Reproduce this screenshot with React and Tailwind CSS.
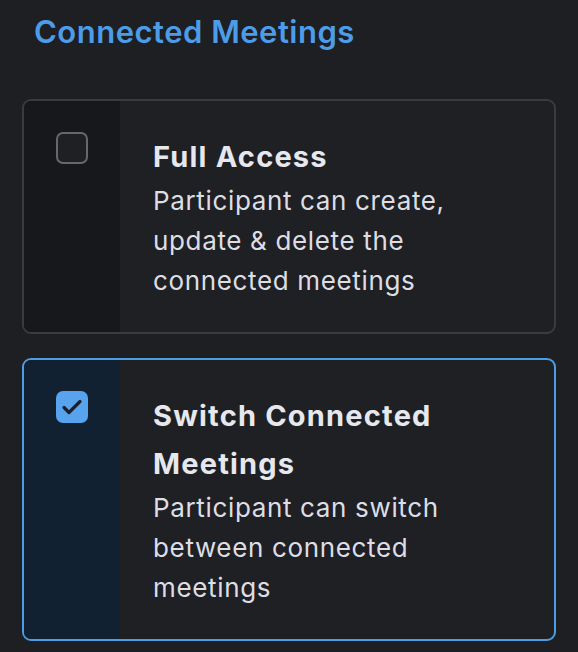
import React, { useState } from 'react';

const options = [
  {
    id: 'full',
    title: 'Full Access',
    description: 'Participant can create, update & delete the connected meetings',
  },
  {
    id: 'switch',
    title: 'Switch Connected Meetings',
    description: 'Participant can switch between connected meetings',
  },
];

const Checkbox = ({ checked }) =>
  checked ? (
    <div className="w-8 h-8 rounded-[7px] bg-[#58a3ee]">
      <svg width="32" height="32" viewBox="0 0 32 32" fill="none">
        <path d="M8 16.5l5 5 11-11" stroke="#1c2028" strokeWidth="3.2" strokeLinecap="round" strokeLinejoin="round" />
      </svg>
    </div>
  ) : (
    <div className="w-8 h-8 rounded-[7px] border-2 border-[#66676c] bg-[#1f2024]" />
  );

const App = () => {
  const [selected, setSelected] = useState('switch');

  return (
    <div className="min-h-[652px] bg-[#1e1f23] px-[22px] pt-[14px] font-['Inter',sans-serif]">
      <h2 className="ml-3 text-[31px] leading-[36px] font-semibold tracking-[0.5px] text-[#4c9ce8]">
        Connected Meetings
      </h2>

      <div className="mt-[49px] flex flex-col gap-[24px]">
        {options.map((opt) => {
          const active = selected === opt.id;
          return (
            <div
              key={opt.id}
              onClick={() => setSelected(opt.id)}
              className={`flex rounded-[9px] border-2 overflow-hidden cursor-pointer bg-[#1f2024] ${
                active ? 'border-[#4c9ce8]' : 'border-[#3a3b40]'
              }`}
            >
              <div className={`w-24 shrink-0 flex justify-center pt-[31px] ${active ? 'bg-[#112131]' : 'bg-[#17181b]'}`}>
                <Checkbox checked={active} />
              </div>
              <div className="flex-1 pl-[33px] pr-[33px] pt-[32px] pb-[31px]">
                <h3 className="text-[29px] leading-[48px] font-bold tracking-[1.2px] text-[#e6e8ee]">{opt.title}</h3>
                <p className="text-[26px] leading-[40px] tracking-[0.65px] text-[#dcdee4]">{opt.description}</p>
              </div>
            </div>
          );
        })}
      </div>
    </div>
  );
};

export default App;
